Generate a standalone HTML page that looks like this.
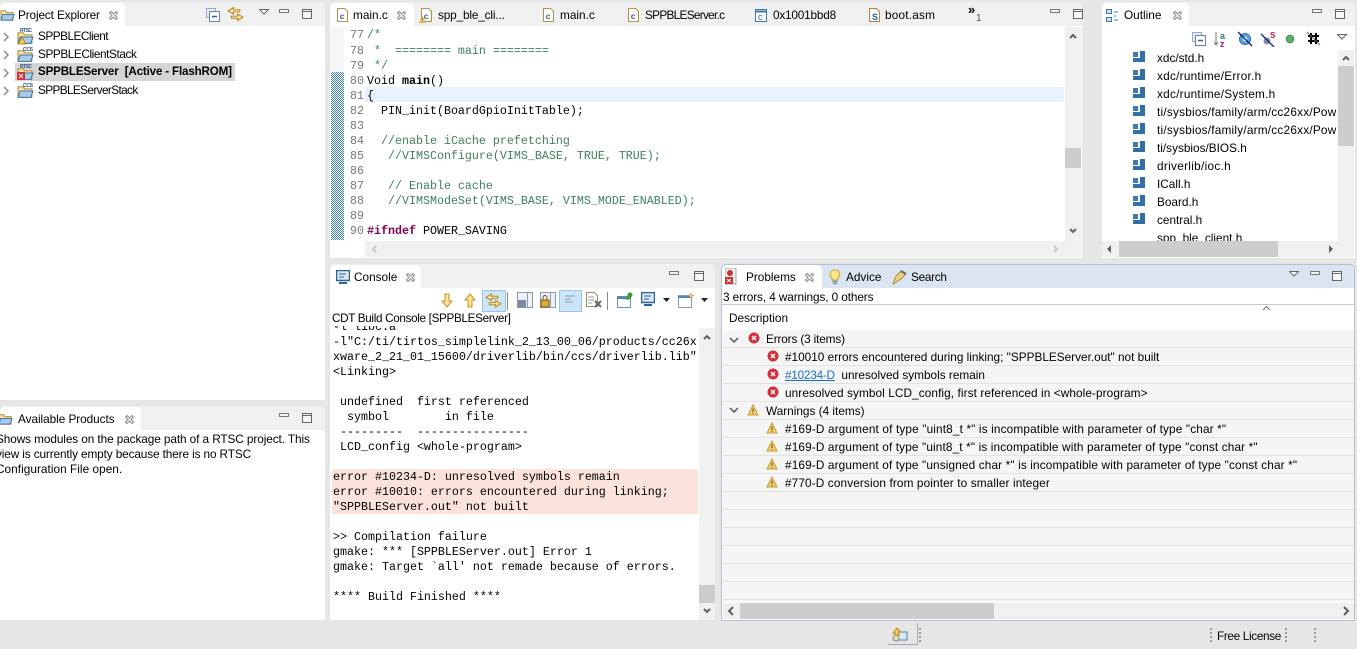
<!DOCTYPE html>
<html><head><meta charset="utf-8"><style>
html,body{margin:0;padding:0}
body{width:1357px;height:649px;overflow:hidden;position:relative;background:#e6e6e6;font-family:"Liberation Sans",sans-serif;font-size:12px;color:#000}
div,span.a,svg.a{position:absolute}
.p{background:#fff;border-radius:5px 5px 0 0;overflow:hidden}
.h{position:absolute;left:0;right:0;top:0;height:24px;background:#f0f0f0}
.tab{background:#fff;border-radius:5px 5px 0 0;top:1px;height:24px}
.t{position:absolute;white-space:nowrap;line-height:16px;font-size:11.8px}
.m{position:absolute;white-space:pre;font-family:"Liberation Mono",monospace;font-size:11.67px;line-height:15px}
.ln{position:absolute;width:22px;text-align:right;font-family:"Liberation Mono",monospace;font-size:11.67px;line-height:15px;color:#787878;left:342px}
.c{color:#3f7f5f}.k{color:#7f0055;font-weight:bold}.b{font-weight:bold}
.row{position:absolute;left:723px;width:631px;height:17px;background:#f5f5f5;border-bottom:1px solid #e3e3e3}
.lbl{font-size:5px;fill:#26527c;font-family:"Liberation Sans",sans-serif;font-weight:bold}
</style></head><body>
<svg width="0" height="0" style="position:absolute">
<defs>
<symbol id="x" viewBox="0 0 11 11"><path d="M1.5 3 3 1.5 5.5 4 8 1.5 9.500 3 7 5.500 9.500 8 8 9.500 5.500 7 3 9.500 1.500 8 4 5.500Z" fill="#fff" stroke="#8a8a8a"/></symbol>
<symbol id="min" viewBox="0 0 11 5"><rect x=".5" y=".5" width="9" height="3" fill="#f4f4f4" stroke="#777"/></symbol>
<symbol id="max" viewBox="0 0 11 11"><rect x=".5" y=".5" width="9" height="9" fill="#f8f8f8" stroke="#666"/><path d="M0 2.500h10" stroke="#666"/></symbol>
<symbol id="menu" viewBox="0 0 11 6"><path d="M.5.500h9L5 5Z" fill="#fff" stroke="#666"/></symbol>
<symbol id="err" viewBox="0 0 12 12"><circle cx="6" cy="6" r="5.500" fill="#d5303c"/><path d="M4 4l4 4M8 4l-4 4" stroke="#fff" stroke-width="1.500"/></symbol>
<symbol id="warn" viewBox="0 0 12 12"><path d="M6 1 11 11H1Z" fill="#f5cf6a" stroke="#c49a35"/><path d="M6 4.500v3.500M6 9v1" stroke="#5a4310"/></symbol>
<symbol id="cf" viewBox="0 0 12 15"><path d="M.5.500h8l3 3v11H.5Z" fill="#fff" stroke="#a5873f"/><text x="3" y="12" font-size="9" font-weight="bold" fill="#2d6296" font-family="Liberation Sans">c</text></symbol>
<symbol id="hd" viewBox="0 0 12 12"><path d="M0 1h5v5H0Z" fill="#3b7ab5"/><path d="M7 0h5v11H0V7h7Z" fill="#3170a8"/></symbol>
<symbol id="fold" viewBox="0 0 16 16"><path d="M1 4h5l1 2h7v8H1Z" fill="#f5e3ae" stroke="#b58b32"/><path d="M1 14l2-6h12l-2 6Z" fill="#a9cbea" stroke="#3d78ad"/></symbol>
<symbol id="sync" viewBox="0 0 16 14"><path d="M6 1 1 4l5 3V5h6V3H6ZM10 7l5 3-5 3v-2H4V9h6Z" fill="#fce9a8" stroke="#b58a24"/></symbol>
<symbol id="up" viewBox="0 0 12 15"><path d="M6 1 11 7H8v7H4V7H1Z" fill="#fbe39c" stroke="#c4931f"/></symbol>
<symbol id="col" viewBox="0 0 14 14"><rect x=".5" y=".5" width="9" height="9" fill="#e8eef5" stroke="#94a8bd"/><rect x="3.500" y="3.500" width="10" height="10" fill="#fff" stroke="#5f86ad"/><path d="M6 8.500h5" stroke="#2d6296" stroke-width="1.500"/></symbol>
</defs></svg>

<!-- Project Explorer -->
<div class="p" style="left:0;top:2px;width:325px;height:398px"><div class="h"></div><div class="tab" style="position:absolute;left:0;width:125px"></div></div>
<svg class="a" style="left:0;top:7px" width="15" height="15"><use href="#fold"/></svg>
<div class="t" style="left:18px;top:7px;letter-spacing:-.13px">Project Explorer</div>
<svg class="a" style="left:108px;top:10px" width="11" height="11"><use href="#x"/></svg>
<svg class="a" style="left:206px;top:8px" width="14" height="14"><use href="#col"/></svg>
<svg class="a" style="left:227px;top:6px" width="17" height="16"><use href="#sync"/></svg>
<svg class="a" style="left:259px;top:9px" width="11" height="6"><use href="#menu"/></svg>
<svg class="a" style="left:279px;top:9px" width="11" height="5"><use href="#min"/></svg>
<svg class="a" style="left:302px;top:9px" width="11" height="11"><use href="#max"/></svg>
<div style="left:15px;top:63px;width:220px;height:18px;background:#d5d5d5"></div>
<svg class="a" style="left:2px;top:31px" width="8" height="70" fill="none" stroke="#8c8c8c" stroke-width="1.500"><path d="M2 2l4 4-4 4M2 20l4 4-4 4M2 38l4 4-4 4M2 56l4 4-4 4"/></svg>
<svg class="a" style="left:17px;top:27px" width="17" height="18"><use href="#fold" y="1"/><path d="M5 10 9 17H1Z" fill="#f5c94e" stroke="#8a6a1c" stroke-width=".7"/><text class="lbl" x="3" y="5" textLength="12">RTSC</text></svg>
<svg class="a" style="left:17px;top:45px" width="17" height="18"><use href="#fold" y="1"/><text class="lbl" x="6" y="6" textLength="10">CCS</text></svg>
<svg class="a" style="left:17px;top:63px" width="17" height="18"><use href="#fold" y="1"/><rect x="0" y="9" width="8" height="8" fill="#d5303c"/><path d="M2 11l4 4M6 11l-4 4" stroke="#fff"/><text class="lbl" x="3" y="5" textLength="12">RTSC</text></svg>
<svg class="a" style="left:17px;top:81px" width="17" height="18"><use href="#fold" y="1"/><text class="lbl" x="6" y="6" textLength="10">CCS</text></svg>
<div class="t" style="left:38px;top:28px;letter-spacing:-.5px">SPPBLEClient</div>
<div class="t" style="left:38px;top:46px;letter-spacing:-.42px">SPPBLEClientStack</div>
<div class="t" style="left:38px;top:64px;font-weight:bold;font-size:11.6px;white-space:pre;letter-spacing:-.16px">SPPBLEServer  [Active - FlashROM]</div>
<div class="t" style="left:38px;top:82px;letter-spacing:-.62px">SPPBLEServerStack</div>

<!-- Available Products -->
<div class="p" style="left:0;top:406px;width:325px;height:214px"><div class="h"></div><div class="tab" style="position:absolute;left:0;width:141px"></div></div>
<svg class="a" style="left:-2px;top:411px" width="15" height="15"><use href="#fold"/></svg>
<div class="t" style="left:18px;top:411px;letter-spacing:-.05px">Available Products</div>
<svg class="a" style="left:124px;top:414px" width="11" height="11"><use href="#x"/></svg>
<svg class="a" style="left:279px;top:413px" width="11" height="5"><use href="#min"/></svg>
<svg class="a" style="left:302px;top:413px" width="11" height="11"><use href="#max"/></svg>
<div class="t" style="left:-4px;top:431px;letter-spacing:-.09px">Shows modules on the package path of a RTSC project. This</div>
<div class="t" style="left:-4px;top:446px;letter-spacing:-.12px">view is currently empty because there is no RTSC</div>
<div class="t" style="left:-4px;top:461px;letter-spacing:.04px">Configuration File open.</div>

<!-- Editor -->
<div class="p" style="left:330px;top:2px;width:752px;height:256px"><div class="h"></div><div class="tab" style="position:absolute;left:0;width:84px"></div></div>
<svg class="a" style="left:337px;top:8px" width="11" height="14"><use href="#cf"/></svg>
<div class="t" style="left:353px;top:7px">main.c</div>
<svg class="a" style="left:396px;top:10px" width="11" height="11"><use href="#x"/></svg>
<svg class="a" style="left:421px;top:8px" width="11" height="14"><use href="#cf"/></svg>
<svg class="a" style="left:419px;top:16px" width="7" height="7"><use href="#warn"/></svg>
<div class="t" style="left:438px;top:7px;letter-spacing:-.15px">spp_ble_cli...</div>
<svg class="a" style="left:543px;top:8px" width="11" height="14"><use href="#cf"/></svg>
<div class="t" style="left:560px;top:7px">main.c</div>
<svg class="a" style="left:628px;top:8px" width="11" height="14"><use href="#cf"/></svg>
<div class="t" style="left:645px;top:7px;letter-spacing:-.7px">SPPBLEServer.c</div>
<svg class="a" style="left:755px;top:9px" width="12" height="13"><rect x=".5" y=".5" width="11" height="12" fill="#fff" stroke="#3d78ad"/><path d="M0 2.500h12" stroke="#3d78ad" stroke-width="2"/><text x="3" y="11" font-size="9" fill="#2d6296" font-family="Liberation Sans">c</text></svg>
<div class="t" style="left:773px;top:7px;letter-spacing:-.2px">0x1001bbd8</div>
<svg class="a" style="left:869px;top:8px" width="11" height="14"><path d="M.5.500h7l3 3v10H.5Z" fill="#fff" stroke="#a5873f"/><text x="3" y="12" font-size="9" font-weight="bold" fill="#2d6296" font-family="Liberation Sans">S</text></svg>
<div class="t" style="left:885px;top:7px;letter-spacing:.2px">boot.asm</div>
<div class="t" style="left:968px;top:2px;font-size:13px;font-weight:bold">»</div>
<div class="t" style="left:976px;top:11px;font-size:10px;color:#356">1</div>
<svg class="a" style="left:1050px;top:9px" width="11" height="5"><use href="#min"/></svg>
<svg class="a" style="left:1073px;top:9px" width="11" height="11"><use href="#max"/></svg>
<div style="left:331px;top:72px;width:13px;height:168px;background:#fff;background-image:conic-gradient(#3f7fc6 25%,#fff 0 50%,#3f7fc6 0 75%,#fff 0);background-size:2px 2px"></div>
<div style="left:331px;top:27px;width:13px;height:45px;background:#f6f6f6"></div>
<div style="left:365px;top:87px;width:699px;height:15px;background:#e8f2fe"></div>
<div class="ln" style="top:28px">77</div><div class="ln" style="top:44px">78</div><div class="ln" style="top:59px">79</div><div class="ln" style="top:74px">80</div><div class="ln" style="top:89px">81</div><div class="ln" style="top:104px">82</div><div class="ln" style="top:119px">83</div><div class="ln" style="top:134px">84</div><div class="ln" style="top:149px">85</div><div class="ln" style="top:164px">86</div><div class="ln" style="top:179px">87</div><div class="ln" style="top:194px">88</div><div class="ln" style="top:209px">89</div><div class="ln" style="top:224px">90</div>
<div class="m c" style="left:367px;top:28px">/*</div>
<div class="m c" style="left:367px;top:44px"> *  ======== main ========</div>
<div class="m c" style="left:367px;top:59px"> */</div>
<div class="m" style="left:367px;top:74px">Void <span class="b">main</span>()</div>
<div class="m" style="left:367px;top:89px">{</div>
<div class="m" style="left:367px;top:104px">  PIN_init(BoardGpioInitTable);</div>
<div class="m c" style="left:367px;top:134px">  //enable iCache prefetching</div>
<div class="m c" style="left:367px;top:149px">   //VIMSConfigure(VIMS_BASE, TRUE, TRUE);</div>
<div class="m c" style="left:367px;top:179px">   // Enable cache</div>
<div class="m c" style="left:367px;top:194px">   //VIMSModeSet(VIMS_BASE, VIMS_MODE_ENABLED);</div>
<div class="m" style="left:367px;top:224px"><span class="k">#ifndef</span> POWER_SAVING</div>
<div style="left:1065px;top:27px;width:16px;height:214px;background:#f0f0f0"></div>
<div style="left:1065px;top:148px;width:16px;height:20px;background:#cdcdcd"></div>
<svg class="a" style="left:1065px;top:27px" width="16" height="214" fill="none" stroke="#606060" stroke-width="2"><path d="M5 11l3-3 3 3M5 202l3 3 3-3"/></svg>
<div style="left:365px;top:241px;width:716px;height:16px;background:#f0f0f0"></div>
<svg class="a" style="left:365px;top:241px" width="716" height="16" fill="none" stroke="#c8c8c8" stroke-width="2"><path d="M11 5 8 8l3 3M689 5l3 3-3 3"/></svg>

<!-- Outline -->
<div class="p" style="left:1102px;top:2px;width:253px;height:256px"><div class="h"></div><div class="tab" style="position:absolute;left:0;width:87px"></div></div>
<svg class="a" style="left:1106px;top:9px" width="12" height="14"><rect x=".5" y=".5" width="5" height="4" fill="#cfe0f0" stroke="#3d78ad"/><rect x=".5" y="8.500" width="5" height="4" fill="#cfe0f0" stroke="#3d78ad"/><path d="M8 3h4M8 7h2M8 11h4" stroke="#3d78ad"/></svg>
<div class="t" style="left:1124px;top:7px">Outline</div>
<svg class="a" style="left:1172px;top:10px" width="11" height="11"><use href="#x"/></svg>
<svg class="a" style="left:1312px;top:9px" width="11" height="5"><use href="#min"/></svg>
<svg class="a" style="left:1335px;top:9px" width="11" height="11"><use href="#max"/></svg>
<svg class="a" style="left:1192px;top:32px" width="14" height="14"><use href="#col"/></svg>
<svg class="a" style="left:1214px;top:31px" width="16" height="17"><path d="M2 1v12M0 11l2 3 2-3" stroke="#777" fill="none"/><text x="6" y="8" font-size="9" font-weight="bold" fill="#2d7a6a" font-family="Liberation Sans">a</text><text x="6" y="16" font-size="9" font-weight="bold" fill="#7d2a8e" font-family="Liberation Sans">z</text></svg>
<svg class="a" style="left:1237px;top:31px" width="16" height="16"><circle cx="8" cy="8" r="5.500" fill="#5fa9dc" stroke="#2d6ea5"/><circle cx="8" cy="8" r="2" fill="#fff"/><path d="M1 1l14 14" stroke="#10208a" stroke-width="1.300"/></svg>
<svg class="a" style="left:1260px;top:31px" width="16" height="16"><circle cx="7" cy="10" r="3.500" fill="#8a8f95"/><path d="M1 3l13 13" stroke="#10208a" stroke-width="1.300"/><text x="10" y="7" font-size="8" font-weight="bold" fill="#c4184a" font-family="Liberation Sans">S</text></svg>
<svg class="a" style="left:1285px;top:34px" width="10" height="10"><circle cx="5" cy="5" r="3.800" fill="#62ad6d" stroke="#3f8a4b"/></svg>
<svg class="a" style="left:1306px;top:31px" width="15" height="15" stroke="#000" stroke-width="2"><path d="M5 2v11M10 2v11M2 5h11M2 10h11"/><path d="M1 1l13 13" stroke="#666" stroke-width="1"/></svg>
<svg class="a" style="left:1337px;top:34px" width="11" height="6"><use href="#menu"/></svg>
<svg class="a" style="left:1133px;top:51px" width="12" height="12"><use href="#hd"/></svg>
<svg class="a" style="left:1133px;top:69px" width="12" height="12"><use href="#hd"/></svg>
<svg class="a" style="left:1133px;top:87px" width="12" height="12"><use href="#hd"/></svg>
<svg class="a" style="left:1133px;top:105px" width="12" height="12"><use href="#hd"/></svg>
<svg class="a" style="left:1133px;top:123px" width="12" height="12"><use href="#hd"/></svg>
<svg class="a" style="left:1133px;top:141px" width="12" height="12"><use href="#hd"/></svg>
<svg class="a" style="left:1133px;top:159px" width="12" height="12"><use href="#hd"/></svg>
<svg class="a" style="left:1133px;top:177px" width="12" height="12"><use href="#hd"/></svg>
<svg class="a" style="left:1133px;top:195px" width="12" height="12"><use href="#hd"/></svg>
<svg class="a" style="left:1133px;top:213px" width="12" height="12"><use href="#hd"/></svg>
<div style="left:1102px;top:50px;width:236px;height:191px;overflow:hidden">
<div class="t" style="left:55px;top:0">xdc/std.h</div>
<div class="t" style="left:55px;top:18px;letter-spacing:.25px">xdc/runtime/Error.h</div>
<div class="t" style="left:55px;top:36px;letter-spacing:.25px">xdc/runtime/System.h</div>
<div class="t" style="left:55px;top:54px;letter-spacing:.22px">ti/sysbios/family/arm/cc26xx/Pow</div>
<div class="t" style="left:55px;top:72px;letter-spacing:.22px">ti/sysbios/family/arm/cc26xx/Pow</div>
<div class="t" style="left:55px;top:90px">ti/sysbios/BIOS.h</div>
<div class="t" style="left:55px;top:108px;letter-spacing:.3px">driverlib/ioc.h</div>
<div class="t" style="left:55px;top:126px">ICall.h</div>
<div class="t" style="left:55px;top:144px">Board.h</div>
<div class="t" style="left:55px;top:162px">central.h</div>
<div class="t" style="left:55px;top:180px">spp_ble_client.h</div>
</div>
<div style="left:1338px;top:50px;width:16px;height:191px;background:#f0f0f0"></div>
<div style="left:1338px;top:66px;width:16px;height:80px;background:#cdcdcd"></div>
<svg class="a" style="left:1338px;top:50px" width="16" height="191" fill="none" stroke="#606060" stroke-width="2"><path d="M5 10l3-3 3 3"/></svg>
<div style="left:1102px;top:241px;width:252px;height:16px;background:#f0f0f0"></div>
<div style="left:1119px;top:241px;width:159px;height:16px;background:#cdcdcd"></div>
<svg class="a" style="left:1102px;top:241px" width="252" height="16" fill="#606060"><path d="M5 8l4-4v8ZM227 4l4 4-4 4Z"/></svg>

<!-- Console -->
<div class="p" style="left:330px;top:264px;width:385px;height:356px"><div class="h"></div><div class="tab" style="position:absolute;left:0;width:91px"></div></div>
<svg class="a" style="left:336px;top:270px" width="14" height="14"><rect x=".5" y=".5" width="13" height="10" fill="#dbe8f4" stroke="#2d6296" stroke-width="1.500"/><path d="M3 4h7M3 7h5" stroke="#2d6296"/><path d="M3 13h8" stroke="#2d6296" stroke-width="2"/></svg>
<div class="t" style="left:354px;top:269px">Console</div>
<svg class="a" style="left:405px;top:272px" width="11" height="11"><use href="#x"/></svg>
<svg class="a" style="left:669px;top:271px" width="11" height="5"><use href="#min"/></svg>
<svg class="a" style="left:694px;top:271px" width="11" height="11"><use href="#max"/></svg>
<svg class="a" style="left:441px;top:293px;transform:scaleY(-1)" width="12" height="15"><use href="#up"/></svg>
<svg class="a" style="left:464px;top:293px" width="12" height="15"><use href="#up"/></svg>
<div style="left:482px;top:290px;width:22px;height:20px;background:#cde6f7;border:1px solid #93c8ee;box-sizing:content-box"></div>
<svg class="a" style="left:485px;top:293px" width="17" height="15"><use href="#sync"/></svg>
<div style="left:507px;top:292px;width:1px;height:18px;background:#8a8a8a"></div>
<svg class="a" style="left:517px;top:292px" width="16" height="16"><rect x=".5" y=".5" width="15" height="15" fill="#eef2f6" stroke="#8a9bb0"/><rect x="1" y="8" width="8" height="7" fill="#7c8ba0"/><path d="M10.500 0v16" stroke="#8a9bb0"/></svg>
<svg class="a" style="left:540px;top:292px" width="16" height="16"><rect x=".5" y=".5" width="15" height="15" fill="#eef2f6" stroke="#8a9bb0"/><rect x="1" y="8" width="8" height="7" fill="#d9a93a" stroke="#7a5a10"/><path d="M3 8V5.500a2 2 0 0 1 4 0V8" fill="none" stroke="#7a5a10"/><path d="M10.500 0v16" stroke="#8a9bb0"/></svg>
<div style="left:559px;top:290px;width:21px;height:20px;background:#cde6f7;border:1px solid #93c8ee"></div>
<svg class="a" style="left:565px;top:295px" width="12" height="10" stroke="#8d9fb5"><path d="M0 1h10M0 4h6M0 7h8"/></svg>
<svg class="a" style="left:586px;top:292px" width="16" height="16"><path d="M.5.500h8l3 3v11H.5Z" fill="#fff" stroke="#a08c5f"/><path d="M2 5h6M2 8h6M2 11h4" stroke="#8a9bb0"/><path d="M9 9l6 6M15 9l-6 6" stroke="#666" stroke-width="2"/></svg>
<div style="left:607px;top:292px;width:1px;height:18px;background:#8a8a8a"></div>
<svg class="a" style="left:617px;top:292px" width="16" height="16"><rect x=".5" y="4.500" width="13" height="11" fill="#fff" stroke="#6a8fb0"/><path d="M0 6h14" stroke="#4d86b8" stroke-width="2"/><path d="M8 7l3-4 3 2-3 3Z" fill="#3c9a40"/><circle cx="13" cy="3" r="2.500" fill="#3c9a40"/></svg>
<svg class="a" style="left:641px;top:292px" width="14" height="14"><rect x=".5" y=".5" width="13" height="10" fill="#dbe8f4" stroke="#2d6296" stroke-width="1.500"/><path d="M3 4h7M3 7h5" stroke="#2d6296"/><path d="M3 13h8" stroke="#2d6296" stroke-width="2"/></svg>
<svg class="a" style="left:663px;top:298px" width="7" height="4"><path d="M0 0h7L3.500 4Z" fill="#222"/></svg>
<svg class="a" style="left:678px;top:292px" width="17" height="16"><rect x=".5" y="3.500" width="13" height="12" fill="#fff" stroke="#8a9bb0"/><path d="M0 5h14" stroke="#4d86b8" stroke-width="2"/><path d="M13 1l1 2 2 .5-2 1-1 2-1-2-2-1 2-.5Z" fill="#f2d272" stroke="#b58a24" stroke-width=".5"/></svg>
<svg class="a" style="left:701px;top:298px" width="7" height="4"><path d="M0 0h7L3.500 4Z" fill="#222"/></svg>
<div class="t" style="left:332px;top:311px;font-size:11.7px;letter-spacing:-.32px">CDT Build Console [SPPBLEServer]</div>
<div style="left:332px;top:326px;width:367px;height:292px;overflow:hidden;background:#fff">
<div style="left:0;top:143px;width:366px;height:45px;background:#fbe3dc"></div>
<div class="m" style="left:1px;top:-6px">-l libc.a</div>
<div class="m" style="left:1px;top:9px">-l"C:/ti/tirtos_simplelink_2_13_00_06/products/cc26x</div>
<div class="m" style="left:1px;top:24px">xware_2_21_01_15600/driverlib/bin/ccs/driverlib.lib"</div>
<div class="m" style="left:1px;top:39px">&lt;Linking&gt;</div>
<div class="m" style="left:1px;top:69px"> undefined  first referenced</div>
<div class="m" style="left:1px;top:84px">  symbol        in file</div>
<div class="m" style="left:1px;top:99px"> ---------  ----------------</div>
<div class="m" style="left:1px;top:114px"> LCD_config &lt;whole-program&gt;</div>
<div class="m" style="left:1px;top:144px">error #10234-D: unresolved symbols remain</div>
<div class="m" style="left:1px;top:159px">error #10010: errors encountered during linking;</div>
<div class="m" style="left:1px;top:174px">"SPPBLEServer.out" not built</div>
<div class="m" style="left:1px;top:204px">&gt;&gt; Compilation failure</div>
<div class="m" style="left:1px;top:219px">gmake: *** [SPPBLEServer.out] Error 1</div>
<div class="m" style="left:1px;top:234px">gmake: Target `all' not remade because of errors.</div>
<div class="m" style="left:1px;top:264px">**** Build Finished ****</div>
</div>
<div style="left:699px;top:328px;width:16px;height:292px;background:#f0f0f0"></div>
<div style="left:699px;top:585px;width:16px;height:18px;background:#cdcdcd"></div>
<svg class="a" style="left:699px;top:328px" width="16" height="292" fill="none" stroke="#606060" stroke-width="2"><path d="M5 11l3-3 3 3M5 281l3 3 3-3"/></svg>

<!-- Problems -->
<div class="p" style="left:721px;top:264px;width:634px;height:357px;box-sizing:border-box;border:1px solid #b4c0d4"><div class="h" style="background:#dbe4f1;height:23px"></div><div class="tab" style="position:absolute;left:0;width:100px;top:0"></div></div>
<svg class="a" style="left:725px;top:268px" width="14" height="17"><rect x="0" y="0" width="11" height="16" fill="#eee" stroke="#9aa"/><circle cx="5" cy="5" r="3" fill="#c33"/><rect y="9" width="8" height="7" fill="#c33"/><path d="M2 11l4 3M6 11l-4 3" stroke="#fff"/></svg>
<div class="t" style="left:746px;top:269px">Problems</div>
<svg class="a" style="left:804px;top:272px" width="11" height="11"><use href="#x"/></svg>
<svg class="a" style="left:829px;top:269px" width="12" height="16"><path d="M6 1a4.500 4.500 0 0 1 3 8v2H3V9a4.500 4.500 0 0 1 3-8Z" fill="#fbe78a" stroke="#c9a436"/><path d="M3.500 12.500h5M4 14.500h4" stroke="#7c8fa3" stroke-width="1.500"/></svg>
<div class="t" style="left:846px;top:269px">Advice</div>
<svg class="a" style="left:892px;top:269px" width="16" height="16"><path d="M1 15l3-8 5-5 5 3-5 5Z" fill="#e9cf86" stroke="#b08b34"/><path d="M9 2l5 3" stroke="#666" stroke-width="2"/></svg>
<div class="t" style="left:911px;top:269px;letter-spacing:-.3px">Search</div>
<svg class="a" style="left:1289px;top:271px" width="11" height="6"><use href="#menu"/></svg>
<svg class="a" style="left:1310px;top:271px" width="11" height="5"><use href="#min"/></svg>
<svg class="a" style="left:1332px;top:271px" width="11" height="11"><use href="#max"/></svg>
<div class="t" style="left:723px;top:289px;letter-spacing:-.1px">3 errors, 4 warnings, 0 others</div>
<div style="left:722px;top:304px;width:632px;height:1px;background:#c9c9c9"></div>
<div class="t" style="left:729px;top:310px">Description</div>
<svg class="a" style="left:1262px;top:305px" width="9" height="6" fill="none" stroke="#777"><path d="M1 5l3.500-3.500L8 5"/></svg>
<div style="left:723px;top:330px;width:631px;height:272px;background:#f5f5f5"></div>
<div class="row" style="top:330px"></div><div class="row" style="top:348px"></div><div class="row" style="top:366px"></div><div class="row" style="top:384px"></div><div class="row" style="top:402px"></div><div class="row" style="top:420px"></div><div class="row" style="top:438px"></div><div class="row" style="top:456px"></div><div class="row" style="top:474px"></div><div class="row" style="top:492px"></div><div class="row" style="top:510px"></div><div class="row" style="top:528px"></div><div class="row" style="top:546px"></div><div class="row" style="top:564px"></div><div class="row" style="top:582px"></div>
<svg class="a" style="left:729px;top:336px" width="10" height="80" fill="none" stroke="#555" stroke-width="1.500"><path d="M1 2l4 4 4-4M1 72l4 4 4-4"/></svg>
<svg class="a" style="left:748px;top:332px" width="12" height="12"><use href="#err"/></svg>
<div class="t" style="left:766px;top:331px;letter-spacing:-.15px">Errors (3 items)</div>
<svg class="a" style="left:767px;top:350px" width="12" height="12"><use href="#err"/></svg>
<div class="t" style="left:785px;top:349px">#10010 errors encountered during linking; "SPPBLEServer.out" not built</div>
<svg class="a" style="left:767px;top:368px" width="12" height="12"><use href="#err"/></svg>
<div class="t" style="left:785px;top:367px;white-space:pre"><span style="color:#1a6fc4;text-decoration:underline;letter-spacing:-.25px">#10234-D</span>  unresolved symbols remain</div>
<svg class="a" style="left:767px;top:386px" width="12" height="12"><use href="#err"/></svg>
<div class="t" style="left:785px;top:385px;letter-spacing:.09px">unresolved symbol LCD_config, first referenced in &lt;whole-program&gt;</div>
<svg class="a" style="left:747px;top:404px" width="12" height="12"><use href="#warn"/></svg>
<div class="t" style="left:766px;top:403px">Warnings (4 items)</div>
<svg class="a" style="left:766px;top:422px" width="12" height="12"><use href="#warn"/></svg>
<div class="t" style="left:785px;top:421px;letter-spacing:.145px">#169-D argument of type "uint8_t *" is incompatible with parameter of type "char *"</div>
<svg class="a" style="left:766px;top:440px" width="12" height="12"><use href="#warn"/></svg>
<div class="t" style="left:785px;top:439px;letter-spacing:.135px">#169-D argument of type "uint8_t *" is incompatible with parameter of type "const char *"</div>
<svg class="a" style="left:766px;top:458px" width="12" height="12"><use href="#warn"/></svg>
<div class="t" style="left:785px;top:457px;letter-spacing:.135px">#169-D argument of type "unsigned char *" is incompatible with parameter of type "const char *"</div>
<svg class="a" style="left:766px;top:476px" width="12" height="12"><use href="#warn"/></svg>
<div class="t" style="left:785px;top:475px;letter-spacing:.12px">#770-D conversion from pointer to smaller integer</div>
<div style="left:723px;top:603px;width:631px;height:16px;background:#f0f0f0"></div>
<div style="left:740px;top:603px;width:254px;height:16px;background:#cdcdcd"></div>
<svg class="a" style="left:723px;top:603px" width="631" height="16" fill="none" stroke="#606060" stroke-width="2"><path d="M10 4 6 8l4 4M621 4l4 4-4 4"/></svg>

<!-- Status bar -->
<div style="left:888px;top:623px;width:29px;height:21px;border-right:1px solid #aaa;border-bottom:1px solid #aaa"></div>
<svg class="a" style="left:892px;top:626px" width="16" height="16"><rect x="5" y="6" width="10" height="8" fill="#dbe8f4" stroke="#4d86b8"/><path d="M1 7l4-5 4 4H7v3H3V7Z" fill="#f2c75c" stroke="#b58a24"/><circle cx="4" cy="12" r="3" fill="#e6dfb5" stroke="#888"/></svg>
<svg class="a" style="left:919px;top:628px" width="3" height="16" fill="#999"><path d="M0 0h2v2H0ZM0 4h2v2H0ZM0 8h2v2H0ZM0 12h2v2H0Z"/></svg>
<svg class="a" style="left:1210px;top:628px" width="3" height="16" fill="#999"><path d="M0 0h2v2H0ZM0 4h2v2H0ZM0 8h2v2H0ZM0 12h2v2H0Z"/></svg>
<svg class="a" style="left:1285px;top:628px" width="3" height="16" fill="#999"><path d="M0 0h2v2H0ZM0 4h2v2H0ZM0 8h2v2H0ZM0 12h2v2H0Z"/></svg>
<svg class="a" style="left:1314px;top:628px" width="3" height="16" fill="#999"><path d="M0 0h2v2H0ZM0 4h2v2H0ZM0 8h2v2H0ZM0 12h2v2H0Z"/></svg>
<div class="t" style="left:1217px;top:628px;letter-spacing:-.35px">Free License</div>
</body></html>
